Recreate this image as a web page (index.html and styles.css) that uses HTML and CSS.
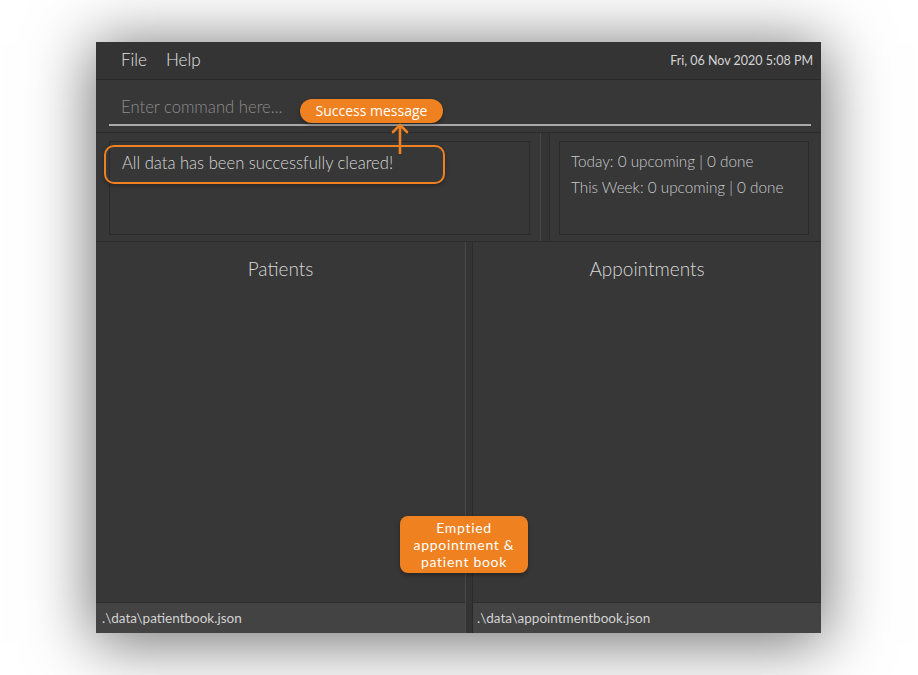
FILE: index.html
```html
<!DOCTYPE html>
<html>
<head>
<meta charset="utf-8">
<title>Clinic app</title>
<link rel="stylesheet" href="styles.css">
</head>
<body>
<div class="stage">
  <div class="window">
    <div class="menubar">
      <div class="menus"><span class="menu">File</span><span class="menu">Help</span></div>
      <div class="date">Fri, 06 Nov 2020 5:08 PM</div>
    </div>
    <div class="command">
      <div class="cmd-input">Enter command here...</div>
    </div>
    <div class="info-row">
      <div class="pane result-pane">
        <div class="box result-box"><p class="msg">All data has been successfully cleared!</p></div>
      </div>
      <div class="vdivider"></div>
      <div class="pane stats-pane">
        <div class="box stats-box">
          <p class="stat">Today: 0 upcoming | 0 done</p>
          <p class="stat">This Week: 0 upcoming | 0 done</p>
        </div>
      </div>
    </div>
    <div class="lists">
      <div class="list list-left">
        <div class="list-title">Patients</div>
        <div class="list-body"></div>
        <div class="status">.\data\patientbook.json</div>
      </div>
      <div class="vdivider list-divider"></div>
      <div class="list list-right">
        <div class="list-title">Appointments</div>
        <div class="list-body"></div>
        <div class="status">.\data\appointmentbook.json</div>
      </div>
    </div>
  </div>

  <div class="pill pill-success">Success message</div>
  <svg class="arrow" width="20" height="34" viewBox="0 0 20 34">
    <path d="M3 11 L10 4 L17 11" fill="none" stroke="#ef8120" stroke-width="2.6" stroke-linecap="round" stroke-linejoin="round"/>
    <path d="M10 5 V33" fill="none" stroke="#ef8120" stroke-width="2.6"/>
  </svg>
  <div class="outline"></div>
  <div class="pill pill-empty">
    <div class="pill-line">Emptied</div>
    <div class="pill-line">appointment &amp;</div>
    <div class="pill-line">patient book</div>
  </div>
</div>
</body>
</html>
```

FILE: styles.css
```css
* { box-sizing: border-box; }
html, body { margin: 0; padding: 0; background: #ffffff; }
body { font-family: "Lato", "Liberation Sans", sans-serif; font-weight: 300; }

.stage {
  position: relative;
  width: 918px;
  height: 675px;
  padding: 42px 0 0 96px;
}

.window {
  width: 725px;
  height: 591px;
  background: #373737;
  display: flex;
  flex-direction: column;
  box-shadow: 0 6px 60px 4px rgba(0, 0, 0, 0.55);
}

.menubar {
  height: 38px;
  flex: 0 0 38px;
  background: #343434;
  border-bottom: 1px solid #2a2a2a;
  display: flex;
  align-items: center;
  justify-content: space-between;
  padding: 0 8px 0 25px;
}
.menus { display: flex; gap: 19px; margin-top: -2px; }
.menu { color: #e2e2e2; font-size: 17px; }
.date { color: #d4d4d4; font-size: 12.5px; font-weight: 400; margin-top: -1px; }

.command {
  flex: 0 0 53px;
  padding: 12px 10px 0 13px;
  border-bottom: 1px solid #2c2c2c;
}
.cmd-input {
  height: 34px;
  line-height: 30px;
  padding-left: 12px;
  border-bottom: 2px solid #a9a9a9;
  color: #8c8c8c;
  font-size: 16.7px;
}

.info-row {
  flex: 0 0 109px;
  display: flex;
  border-bottom: 1px solid #2c2c2c;
}
.pane { height: 100%; }
.result-pane { flex: 0 0 444px; padding: 8px 10px 6px 13px; }
.stats-pane { flex: 1; padding: 8px 12px 6px 9px; }
.box {
  height: 100%;
  border: 1px solid #2a2a2a;
}
.result-box { padding: 9px 12px; }
.msg { margin: 0; color: #d6d6d6; font-size: 16.6px; line-height: 24px; }
.stats-box { padding: 6px 11px; }
.stat { margin: 0; color: #c8cbcf; font-size: 15.3px; line-height: 26px; }

.vdivider {
  flex: 0 0 10px;
  background: #343434;
  border-left: 1px solid #474747;
  border-right: 1px solid #2a2a2a;
}

.lists { flex: 1; display: flex; min-height: 0; }
.list { display: flex; flex-direction: column; }
.list-left { flex: 0 0 369px; }
.list-right { flex: 1; }
.list-divider { flex: 0 0 8px; }
.list-title {
  text-align: center;
  color: #d8d8d8;
  font-size: 19px;
  line-height: 28px;
  padding-top: 13px;
}
.list-body { flex: 1; }
.status {
  flex: 0 0 31px;
  background: #434343;
  border-top: 1px solid #2e2e2e;
  color: #d2d2d2;
  font-size: 13.5px;
  font-weight: 400;
  line-height: 30px;
  padding-left: 6px;
}
.list-right .status { padding-left: 4px; }

.pill {
  position: absolute;
  background: #ef8120;
  color: #ffffff;
  font-weight: 400;
  text-align: center;
  box-shadow: 0 2px 4px rgba(0, 0, 0, 0.35);
}
.pill-success {
  left: 300px; top: 99px;
  width: 143px; height: 24px;
  font-family: "Open Sans", "Noto Sans", sans-serif;
  font-size: 14px;
  line-height: 24px;
  border-radius: 12px;
}
.pill-empty {
  left: 400px; top: 516px;
  width: 128px; height: 57px;
  border-radius: 8px;
  padding-top: 3px;
  font-family: "Lato", "Liberation Sans", sans-serif;
  font-size: 14px;
  letter-spacing: 0.7px;
}
.pill-line { height: 17px; line-height: 17px; }
.arrow {
  position: absolute;
  left: 390px; top: 121px;
}
.outline {
  position: absolute;
  left: 104px; top: 145px;
  width: 341px; height: 39px;
  border: 2.5px solid #ef8120;
  border-radius: 10px;
  box-shadow: 0 2px 4px rgba(0, 0, 0, 0.3);
}
```
